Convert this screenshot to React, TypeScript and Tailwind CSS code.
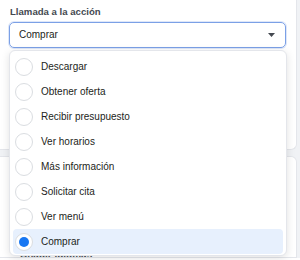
import { useState } from 'react';

const options = [
  'Descargar',
  'Obtener oferta',
  'Recibir presupuesto',
  'Ver horarios',
  'Más información',
  'Solicitar cita',
  'Ver menú',
  'Comprar',
];

export default function App() {
  const [selected, setSelected] = useState('Comprar');

  return (
    <div className="relative w-[300px] h-[260px] overflow-hidden bg-[#f0f2f5] font-['Liberation_Sans',Arial,sans-serif] text-[#1c1e21]">
      <div className="flex flex-col h-full">
        {/* card with the field */}
        <div className="h-[150px] mr-[3px] bg-white border-r border-b border-[#e4e6eb] rounded-br-[6px] pl-[9px] pr-[10px] pt-[5px]">
          <div className="pl-[1px] text-[9.6px] leading-[13px] font-bold text-[#444950]">Llamada a la acción</div>
          <div className="mt-[4px] h-[26px] flex items-center justify-between pl-[9px] pr-[10px] border border-[#7ba0e6] rounded-[5px] shadow-[0_0_0_1px_rgba(123,160,230,0.25)]">
            <span className="text-[10px] leading-none">{selected}</span>
            <svg width="7" height="4" viewBox="0 0 7 4">
              <path d="M0 0h7L3.5 4z" fill="#444950" />
            </svg>
          </div>
        </div>

        {/* card behind the menu */}
        <div className="mt-[6px] mr-[3px] h-[102px] bg-white border-r border-t border-b border-[#e4e6eb] rounded-tr-[6px] flex flex-col justify-end pl-[20px] overflow-hidden">
          <div className="text-[10px] leading-[10px] font-bold text-[#4b4f56] translate-y-[3px]">Añadir idiomas</div>
        </div>
        <div className="flex-1 bg-white" />
      </div>

      {/* open menu */}
      <div className="absolute left-[9px] top-[50px] w-[278px] bg-white rounded-[6px] border border-[#e4e6eb] shadow-[0_2px_8px_rgba(0,0,0,0.12)] pt-[3px] pb-[1px] px-[3px]">
        {options.map((opt) => {
          const isOn = opt === selected;
          return (
            <div
              key={opt}
              onClick={() => setSelected(opt)}
              className={`h-[25px] flex items-center gap-[8px] pl-[2px] rounded-[4px] ${isOn ? 'bg-[#e7f0fd]' : ''}`}
            >
              <span className="w-[18px] h-[18px] rounded-full border border-[#dadde1] bg-white flex items-center justify-center">
                {isOn && <span className="w-[10px] h-[10px] rounded-full bg-[#1877f2]" />}
              </span>
              <span className="text-[10px] leading-none">{opt}</span>
            </div>
          );
        })}
      </div>
    </div>
  );
}
